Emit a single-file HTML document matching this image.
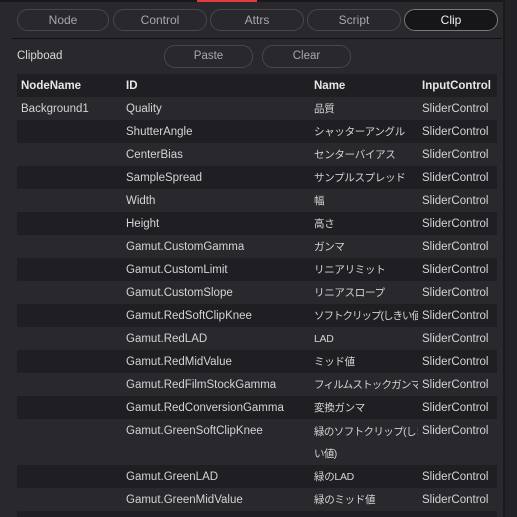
<!DOCTYPE html>
<html><head><meta charset="utf-8"><style>
html,body{margin:0;width:517px;height:517px;overflow:hidden}
body{background:#28282d;font-family:"Liberation Sans","Noto Sans CJK JP",sans-serif;font-size:11.5px;color:#d4d4d4;position:relative}
.a{position:absolute}
.tab{position:absolute;top:9px;height:20px;border:1px solid #47474d;border-radius:11px;text-align:center;line-height:20px;color:#a8a8ac;font-size:12px}
.btn{position:absolute;top:45px;height:21px;border:1px solid #47474d;border-radius:11px;text-align:center;line-height:21px;color:#a8a8ac}
table{position:absolute;left:17px;top:74px;width:480px;border-collapse:collapse;table-layout:fixed}
td{padding:2px 0 0 4px;height:21px;vertical-align:top;line-height:21px;white-space:nowrap;overflow:hidden}
tr:nth-child(odd){background:#1f1f23}
th{text-align:left;padding:2px 0 0 4px;height:21px;line-height:21px;font-weight:bold;color:#e6e6e6;overflow:hidden;white-space:nowrap}
.j{font-size:10.5px;letter-spacing:-0.3px}
</style></head><body>
<div class="a" style="left:0;top:0;width:503px;height:2px;background:#18181b"></div>
<div class="a" style="left:197px;top:0;width:60px;height:2px;background:#e23b3b"></div>
<div class="a" style="left:503px;top:0;width:2px;height:517px;background:#1a1a1d"></div>
<div class="a" style="left:505px;top:0;width:12px;height:517px;background:#222226"></div>
<div class="tab" style="left:17px;width:90px">Node</div>
<div class="tab" style="left:113px;width:92px">Control</div>
<div class="tab" style="left:210px;width:92px">Attrs</div>
<div class="tab" style="left:307px;width:92px">Script</div>
<div class="tab" style="left:404px;width:92px;background:#161618;border-color:#77777c;color:#f0f0f0">Clip</div>
<div class="a" style="left:12px;top:38px;width:490px;height:1px;background:#111113"></div>
<div class="a" style="left:17px;top:50px;color:#d8d8d8">Clipboad</div>
<div class="btn" style="left:164px;width:87px">Paste</div>
<div class="btn" style="left:262px;width:87px">Clear</div>
<table>
<colgroup><col style="width:105px"><col style="width:188px"><col style="width:108px"><col style="width:79px"></colgroup>
<tr><th>NodeName</th><th>ID</th><th>Name</th><th>InputControl</th></tr>
<tr><td>Background1</td><td>Quality</td><td class="j">品質</td><td>SliderControl</td></tr>
<tr><td></td><td>ShutterAngle</td><td class="j">シャッターアングル</td><td>SliderControl</td></tr>
<tr><td></td><td>CenterBias</td><td class="j">センターバイアス</td><td>SliderControl</td></tr>
<tr><td></td><td>SampleSpread</td><td class="j">サンプルスプレッド</td><td>SliderControl</td></tr>
<tr><td></td><td>Width</td><td class="j">幅</td><td>SliderControl</td></tr>
<tr><td></td><td>Height</td><td class="j">高さ</td><td>SliderControl</td></tr>
<tr><td></td><td>Gamut.CustomGamma</td><td class="j">ガンマ</td><td>SliderControl</td></tr>
<tr><td></td><td>Gamut.CustomLimit</td><td class="j">リニアリミット</td><td>SliderControl</td></tr>
<tr><td></td><td>Gamut.CustomSlope</td><td class="j">リニアスロープ</td><td>SliderControl</td></tr>
<tr><td></td><td>Gamut.RedSoftClipKnee</td><td class="j" style="letter-spacing:-1px">ソフトクリップ(しきい値)</td><td>SliderControl</td></tr>
<tr><td></td><td>Gamut.RedLAD</td><td class="j">LAD</td><td>SliderControl</td></tr>
<tr><td></td><td>Gamut.RedMidValue</td><td class="j">ミッド値</td><td>SliderControl</td></tr>
<tr><td></td><td>Gamut.RedFilmStockGamma</td><td class="j" style="letter-spacing:-0.8px">フィルムストックガンマ</td><td>SliderControl</td></tr>
<tr><td></td><td>Gamut.RedConversionGamma</td><td class="j">変換ガンマ</td><td>SliderControl</td></tr>
<tr><td style="height:44px"></td><td>Gamut.GreenSoftClipKnee</td><td class="j" style="line-height:22px;letter-spacing:-0.6px">緑のソフトクリップ(しき<br>い値)</td><td>SliderControl</td></tr>
<tr><td></td><td>Gamut.GreenLAD</td><td class="j">緑のLAD</td><td>SliderControl</td></tr>
<tr><td></td><td>Gamut.GreenMidValue</td><td class="j">緑のミッド値</td><td>SliderControl</td></tr>
<tr><td></td><td>Gamut.GreenFilmStockGamma</td><td class="j">緑のフィルムストックガン</td><td>SliderControl</td></tr>
</table>
</body></html>
